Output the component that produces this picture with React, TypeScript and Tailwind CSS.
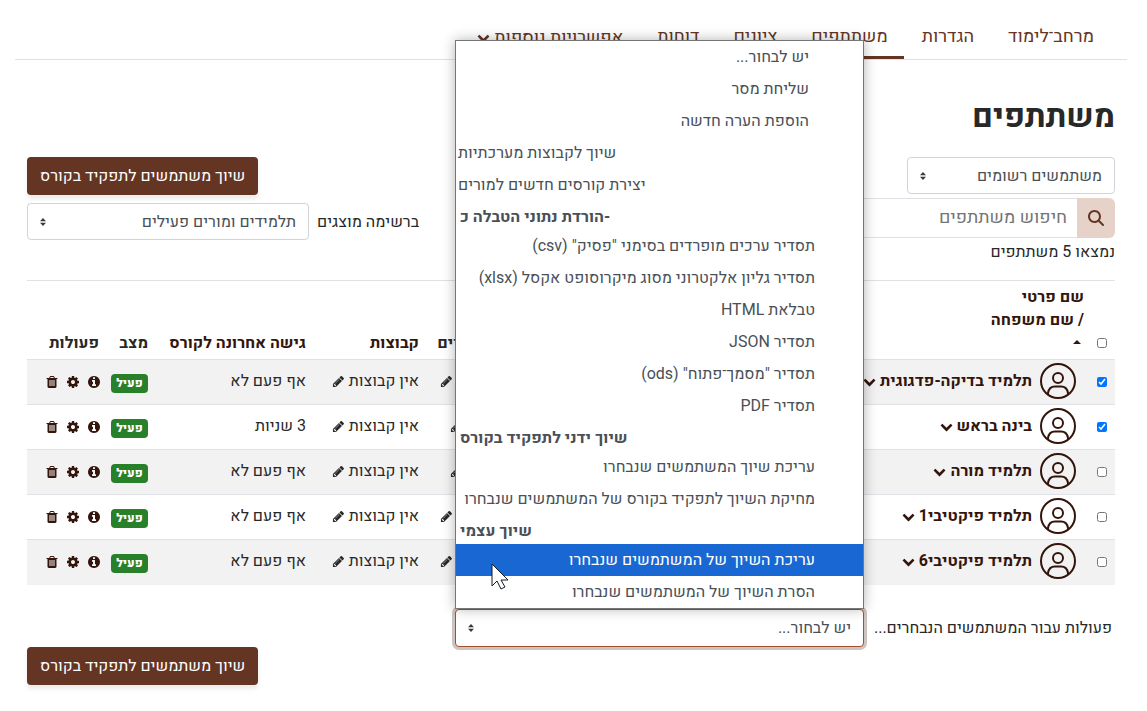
import type { ReactNode } from "react";
import { FaMagnifyingGlass } from "react-icons/fa6";

const ICONS = {
  info: "M1152 1376v-160q0-14-9-23t-23-9h-96v-512q0-14-9-23t-23-9h-320q-14 0-23 9t-9 23v160q0 14 9 23t23 9h96v320h-96q-14 0-23 9t-9 23v160q0 14 9 23t23 9h448q14 0 23-9t9-23zm-128-896v-160q0-14-9-23t-23-9h-192q-14 0-23 9t-9 23v160q0 14 9 23t23 9h192q14 0 23-9t9-23zm640 416q0 209-103 385.5t-279.5 279.5-385.5 103-385.5-103-279.5-279.5-103-385.5 103-385.5 279.5-279.5 385.5-103 385.5 103 279.5 279.5 103 385.5z",
  cog: "M1152 896q0-106-75-181t-181-75-181 75-75 181 75 181 181 75 181-75 75-181zm512-109v222q0 12-8 23t-20 13l-185 28q-19 54-39 91 35 50 107 138 10 12 10 25t-9 23q-27 37-99 108t-94 71q-12 0-26-9l-138-108q-44 23-91 38-16 136-29 186-7 28-36 28h-222q-14 0-24.5-8.5t-11.5-21.5l-28-184q-49-16-90-37l-141 107q-10 9-25 9-14 0-25-11-126-114-165-168-7-10-7-23 0-12 8-23 15-21 51-66.5t54-70.5q-27-50-41-99l-183-27q-13-2-21-12.5t-8-23.5v-222q0-12 8-23t19-13l186-28q14-46 39-92-40-57-107-138-10-12-10-24 0-10 9-23 26-36 98.5-107.5t94.5-71.5q13 0 26 10l138 107q44-23 91-38 16-136 29-186 7-28 36-28h222q14 0 24.5 8.5t11.5 21.5l28 184q49 16 90 37l142-107q9-9 24-9 13 0 25 10 129 119 165 170 7 8 7 22 0 12-8 23-15 21-51 66.5t-54 70.5q26 50 41 98l183 28q13 2 21 12.5t8 23.5z",
  trash: "M704 1376v-704q0-14-9-23t-23-9h-64q-14 0-23 9t-9 23v704q0 14 9 23t23 9h64q14 0 23-9t9-23zm256 0v-704q0-14-9-23t-23-9h-64q-14 0-23 9t-9 23v704q0 14 9 23t23 9h64q14 0 23-9t9-23zm256 0v-704q0-14-9-23t-23-9h-64q-14 0-23 9t-9 23v704q0 14 9 23t23 9h64q14 0 23-9t9-23zm-544-992h448l-48-117q-7-9-17-11h-317q-10 2-17 11zm928 32v64q0 14-9 23t-23 9h-96v948q0 83-47 143.5t-113 60.5h-832q-66 0-113-58.5t-47-141.5v-952h-96q-14 0-23-9t-9-23v-64q0-14 9-23t23-9h309l70-167q15-37 54-63t79-26h320q40 0 79 26t54 63l70 167h309q14 0 23 9t9 23z",
  pencil: "M491 1536l91-91-235-235-91 91v107h128v128h107zm523-928q0-22-22-22-10 0-17 7l-542 542q-7 7-7 17 0 22 22 22 10 0 17-7l542-542q7-7 7-17zm-54-192l416 416-832 832h-416v-416zm683 96q0 53-37 90l-166 166-416-416 166-165q36-38 90-38 53 0 91 38l235 234q37 39 37 91z",
  chevron: "M1683 808l-742 741q-19 19-45 19t-45-19l-742-741q-19-19-19-45.5t19-45.5l166-165q19-19 45-19t45 19l531 531 531-531q19-19 45-19t45 19l166 165q19 19 19 45.5t-19 45.5z",
};

const Icon = ({ name, className }: { name: keyof typeof ICONS; className: string }) => (
  <svg viewBox="0 0 1792 1792" fill="currentColor" aria-hidden="true" className={`shrink-0 ${className}`}>
    <path d={ICONS[name]} />
  </svg>
);

const Avatar = () => (
  <svg viewBox="0 0 36 36" fill="none" stroke="currentColor" strokeWidth="2" aria-hidden="true" className="size-9 shrink-0">
    <circle cx="18" cy="18" r="17" />
    <circle cx="18" cy="15" r="5" />
    <path d="M8 31.500v-1.500q1-6.500 7-6.500h6q6 0 7 6.500v1.500" />
  </svg>
);

type SelectProps = { id: string; label?: string; value: string; className: string };

const Select = ({ id, label, value, className }: SelectProps) => (
  <div className="relative w-fit">
    <select
      id={id}
      aria-label={label}
      className={`block appearance-none rounded-[4px] border bg-white px-3 text-[#495057] outline-none ${className}`}
    >
      <option>{value}</option>
    </select>
    <svg viewBox="0 0 6 8" fill="#343a40" aria-hidden="true" className="pointer-events-none absolute left-[13px] top-1/2 h-2 w-1.5 -translate-y-1/2">
      <path d="M3 0L6 3.200H0zM0 4.800h6L3 8z" />
    </svg>
  </div>
);

const EnrolButton = () => (
  <button
    type="button"
    className="h-[38px] rounded-[4px] bg-[#653524] px-[13px] text-white shadow-[0_4px_4px_rgba(0,0,0,0.08)]"
  >
    שיוך משתמשים לתפקיד בקורס
  </button>
);

const tabs = ["מרחב־לימוד", "הגדרות", "משתתפים", "ציונים", "דוחות"];

const users = [
  { name: "תלמיד בדיקה-פדגוגית", role: "תלמיד", access: "אף פעם לא", checked: true },
  { name: "בינה בראש", role: "מורה", access: "3 שניות", checked: true },
  { name: "תלמיד מורה", role: "מורה", access: "אף פעם לא", checked: false },
  { name: "תלמיד פיקטיבי1", role: "תלמיד", access: "אף פעם לא", checked: false },
  { name: "תלמיד פיקטיבי6", role: "תלמיד", access: "אף פעם לא", checked: false },
];

const groups = [
  {
    label: "הורדת נתוני הטבלה כ-",
    options: [
      'תסדיר ערכים מופרדים בסימני "פסיק" (csv)',
      'תסדיר גליון אלקטרוני מסוג מיקרוסופט אקסל (xlsx)',
      "טבלאת HTML",
      "תסדיר JSON",
      'תסדיר "מסמך־פתוח" (ods)',
      "תסדיר PDF",
    ],
  },
  {
    label: "שיוך ידני לתפקיד בקורס",
    options: ["עריכת שיוך המשתמשים שנבחרו", "מחיקת השיוך לתפקיד בקורס של המשתמשים שנבחרו"],
  },
  {
    label: "שיוך עצמי",
    options: ["עריכת השיוך של המשתמשים שנבחרו", "הסרת השיוך של המשתמשים שנבחרו"],
  },
];

const HIGHLIGHTED = "עריכת השיוך של המשתמשים שנבחרו";

const Option = ({ className, children }: { className: string; children: ReactNode }) => (
  <div role="option" aria-selected={children === HIGHLIGHTED} className={`h-8 whitespace-nowrap leading-8 ${className}`}>
    {children}
  </div>
);

const ActionMenu = () => (
  <div
    role="listbox"
    aria-label="פעולות"
    className="absolute bottom-full left-0 z-10 w-full border border-[#767676] bg-white text-[#495057] shadow-[0_0_12px_rgba(0,0,0,0.3)]"
  >
    <Option className="pr-[54px]">יש לבחור...</Option>
    <Option className="pr-[54px]">שליחת מסר</Option>
    <Option className="pr-[54px]">הוספת הערה חדשה</Option>
    <Option className="pl-0.5 text-left">שיוך לקבוצות מערכתיות</Option>
    <Option className="pl-0.5 text-left">יצירת קורסים חדשים למורים</Option>
    {groups.map(group => (
      <div key={group.label} role="group" aria-label={group.label}>
        <div dir="ltr" className="h-[29px] pl-1 text-left font-bold leading-8">
          {group.label}
        </div>
        {group.options.map(option => (
          <Option key={option} className={option === HIGHLIGHTED ? "bg-[#1967d2] pr-12 text-white" : "pr-12"}>
            {option}
          </Option>
        ))}
      </div>
    ))}
    {/* mouse pointer */}
    <svg viewBox="0 0 19 28" aria-hidden="true" className="absolute bottom-[17px] left-[35px] h-7 w-[19px]">
      <path d="M1 1v22l5-5 4 8 4-2-4-7h7z" fill="#fff" stroke="#111827" strokeWidth="1" />
    </svg>
  </div>
);

const UserTable = () => (
  <table className="w-full table-fixed border-t border-[#dee2e6] text-right">
    <colgroup>
      <col className="w-[23px]" />
      <col />
      <col className="w-20" />
      <col className="w-[113px]" />
      <col className="w-[158px]" />
      <col className="w-[49px]" />
      <col className="w-20" />
    </colgroup>
    <thead>
      <tr className="h-[79px] align-bottom leading-[23px]">
        <th className="pr-2 pb-[11px]">
          <input type="checkbox" aria-label="בחירת הכל" className="block size-2.5" />
        </th>
        <th className="pr-2 text-[#34150c]">
          <a href="#firstname">שם פרטי</a>
          <br />/ <a href="#lastname">שם משפחה</a>
          <svg viewBox="0 0 8 4" aria-hidden="true" className="mt-2 mr-[3px] mb-[15px] h-1 w-2">
            <path d="M0 4l4-4 4 4z" fill="currentColor" />
          </svg>
        </th>
        <th className="pr-2 pb-1">תפקידים</th>
        <th className="pr-2 pb-1 text-[#34150c]"><a href="#groups">קבוצות</a></th>
        <th className="pr-2 pb-1 whitespace-nowrap text-[#34150c]"><a href="#access">גישה אחרונה לקורס</a></th>
        <th className="pr-2 pb-1">מצב</th>
        <th className="pr-2 pb-1">פעולות</th>
      </tr>
    </thead>
    <tbody>
      {users.map(user => (
        <tr key={user.name} className="h-[45px] border-t border-[#dee2e6] odd:bg-[#f2f2f2]">
          <td className="pr-2">
            <input type="checkbox" defaultChecked={user.checked} aria-label={user.name} className="block size-2.5" />
          </td>
          <td className="pr-4 pb-0.5">
            <a href="#user" className="flex items-center gap-2 font-bold text-[#34150c]">
              <Avatar />
              <span className="flex items-center gap-1">
                {user.name}
                <Icon name="chevron" className="size-[13px]" />
              </span>
            </a>
          </td>
          <td className="pr-2 pb-0.5">
            <span className="flex items-center gap-1">
              {user.role}
              <Icon name="pencil" className="size-[13px]" />
            </span>
          </td>
          <td className="pr-2 pb-0.5">
            <span className="flex items-center gap-1 whitespace-nowrap">
              אין קבוצות
              <Icon name="pencil" className="size-[13px]" />
            </span>
          </td>
          <td className="pr-2 pb-0.5">{user.access}</td>
          <td className="pt-0.5 pr-2">
            <span className="block h-[19px] w-[37px] rounded-[4px] bg-[#29802b] text-center text-xs font-extrabold leading-[18px] text-white">
              פעיל
            </span>
          </td>
          <td className="pr-1.5 text-[#34150c]">
            <span className="flex gap-[7px]">
              <button type="button" aria-label="מידע"><Icon name="info" className="size-3.5" /></button>
              <button type="button" aria-label="עריכה"><Icon name="cog" className="size-3.5" /></button>
              <button type="button" aria-label="מחיקה"><Icon name="trash" className="size-3.5" /></button>
            </span>
          </td>
        </tr>
      ))}
    </tbody>
  </table>
);

const App = () => {
  return (
    <div
      dir="rtl"
      className="bg-white pr-5 pl-[15px] font-['Heebo','Roboto','Open_Sans',sans-serif] text-base leading-6 text-[#282828]"
    >
      <nav className="flex h-[60px] items-end gap-0.5 border-b border-[#dee2e6] pr-[17px] text-lg text-[#653524]">
        {tabs.map(tab => (
          <a
            key={tab}
            href="#tab"
            className={
              tab === "משתתפים"
                ? "h-[47px] border-b-[3px] border-[#653524] px-4 leading-[50px]"
                : "h-[47px] px-4 leading-[50px]"
            }
          >
            {tab}
          </a>
        ))}
        <button type="button" className="flex h-[47px] items-center gap-1 px-4 pt-1">
          אפשרויות נוספות
          <Icon name="chevron" className="size-[13px]" />
        </button>
      </nav>

      <main className="px-3">
        <h1 className="mt-[37px] text-[32px] font-bold leading-10">משתתפים</h1>

        <div className="mt-5 flex justify-between">
          <div>
            <Select id="enrolled" label="תצוגה" value="משתמשים רשומים" className="h-[37px] w-[208px] border-[#ced4da]" />
            <div className="mt-1 flex h-10 w-[320px]">
              <button type="button" aria-label="חיפוש" className="flex w-[38px] items-center justify-center rounded-r-[6px] bg-[#e6d2c9] text-[#653524]">
                <FaMagnifyingGlass className="size-4" />
              </button>
              <input
                type="search"
                aria-label="חיפוש משתתפים"
                placeholder="חיפוש משתתפים"
                className="min-w-0 flex-1 rounded-l-[6px] border border-r-0 border-[#dee2e6] px-2.5 text-lg outline-none placeholder:text-[#757575]"
              />
            </div>
            <p className="mt-0.5">נמצאו 5 משתתפים</p>
          </div>
          <div className="flex flex-col items-end gap-2">
            <EnrolButton />
            <div className="flex items-center gap-2">
              <label htmlFor="shown">ברשימה מוצגים</label>
              <Select id="shown" value="תלמידים ומורים פעילים" className="h-[37px] w-[282px] border-[#ced4da]" />
            </div>
          </div>
        </div>

        <div className="mt-4">
          <UserTable />
        </div>

        <div className="mt-6 flex items-center gap-2.5 pr-[3px]">
          <label htmlFor="action" className="w-[238px] whitespace-nowrap">פעולות עבור המשתמשים הנבחרים...</label>
          <div className="relative">
            <Select id="action" value="יש לבחור..." className="h-[38px] w-[409px] border-[#a3512d] ring-3 ring-[#cdc3bf]" />
            <ActionMenu />
          </div>
        </div>

        <div className="flex justify-end pb-6">
          <EnrolButton />
        </div>
      </main>
    </div>
  );
};

export default App;
